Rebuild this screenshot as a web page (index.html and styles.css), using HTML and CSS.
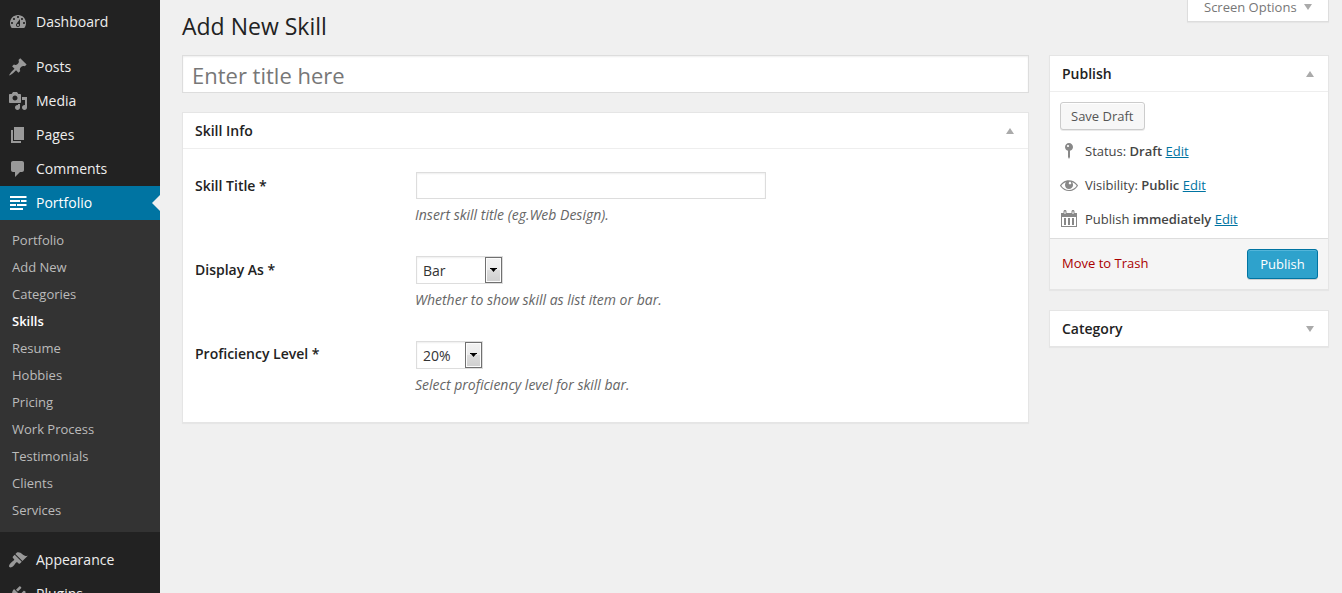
FILE: index.html
```html
<!DOCTYPE html>
<html lang="en">
<head>
<meta charset="utf-8">
<title>Add New Skill</title>
<link rel="stylesheet" href="styles.css">
</head>
<body>
<div class="shell">
  <nav class="sidebar">
    <a class="item"><svg class="icon" viewBox="0 0 20 20"><path fill-rule="evenodd" d="M3.76 16h12.48c1.1-1.37 1.76-3.11 1.76-5 0-4.42-3.58-8-8-8s-8 3.58-8 8c0 1.89.66 3.63 1.76 5zM10 4c.55 0 1 .45 1 1s-.45 1-1 1-1-.45-1-1 .45-1 1-1zM6 6c.55 0 1 .45 1 1s-.45 1-1 1-1-.45-1-1 .45-1 1-1zm8 0c.55 0 1 .45 1 1s-.45 1-1 1-1-.45-1-1 .45-1 1-1zm-5.37 5.55L12 7v6c0 1.1-.9 2-2 2s-2-.9-2-2c0-.57.24-1.08.63-1.45zM4 10c.55 0 1 .45 1 1s-.45 1-1 1-1-.45-1-1 .45-1 1-1zm12 0c.55 0 1 .45 1 1s-.45 1-1 1-1-.45-1-1 .45-1 1-1zm-5 3c0-.55-.45-1-1-1s-1 .45-1 1 .45 1 1 1 1-.45 1-1z"/></svg>Dashboard</a>
    <a class="item spaced"><svg class="icon" viewBox="0 0 20 20"><path d="M10.44 3.02l1.82-1.82 6.36 6.35-1.83 1.82c-1.05-.68-2.48-.57-3.41.36l-.75.75c-.92.93-1.04 2.35-.35 3.41l-1.83 1.82-2.41-2.41-2.8 2.79c-.42.42-3.38 2.71-3.8 2.29s1.86-3.39 2.28-3.81l2.79-2.79L4.1 9.36l1.83-1.82c1.05.69 2.48.57 3.4-.36l.75-.75c.93-.92 1.05-2.35.36-3.41z"/></svg>Posts</a>
    <a class="item"><svg class="icon" viewBox="0 0 20 20"><path fill-rule="evenodd" d="M13 11V4c0-.55-.45-1-1-1h-1.67L9 1H5L3.67 3H2c-.55 0-1 .45-1 1v7c0 .55.45 1 1 1h10c.55 0 1-.45 1-1zM7 4.5c1.38 0 2.5 1.12 2.5 2.5S8.38 9.5 7 9.5 4.5 8.38 4.5 7 5.62 4.5 7 4.5zM14 6h5v10.5c0 1.38-1.12 2.5-2.5 2.5S14 17.88 14 16.5s1.12-2.5 2.5-2.5c.17 0 .34.02.5.05V9h-3V6zm-4 8.05V13h2v3.5c0 1.38-1.12 2.5-2.5 2.5S7 17.88 7 16.5 8.12 14 9.5 14c.17 0 .34.02.5.05z"/></svg>Media</a>
    <a class="item"><svg class="icon" viewBox="0 0 20 20"><path d="M6 15V2h10v13H6zm-1 1h8v2H3V5h2v11z"/></svg>Pages</a>
    <a class="item"><svg class="icon" viewBox="0 0 20 20"><path d="M5 2h9c1.1 0 2 .9 2 2v7c0 1.1-.9 2-2 2h-2l-5 5v-5H5c-1.1 0-2-.9-2-2V4c0-1.1.9-2 2-2z"/></svg>Comments</a>
    <a class="item current"><svg class="icon" viewBox="0 0 20 20"><path d="M2 3h16.500v2H2zM2 7h10v2H2zM13 7h5.500v2H13zM2 11h6v2H2zM9 11h9.500v2H9zM2 15h13v2H2z"/></svg>Portfolio</a>
    <div class="submenu">
      <a>Portfolio</a><a>Add New</a><a>Categories</a><a class="active">Skills</a><a>Resume</a><a>Hobbies</a><a>Pricing</a><a>Work Process</a><a>Testimonials</a><a>Clients</a><a>Services</a>
    </div>
    <a class="item spaced"><svg class="icon" viewBox="0 0 20 20"><path d="M14.48 11.06L7.41 3.99l1.5-1.5c.5-.56 2.3-.47 3.51.32 1.21.8 1.43 1.28 2.91 2.1 1.18.64 2.45 1.26 4.45.85zm-.71.71L6.7 4.7 4.93 6.47c-.39.39-.39 1.02 0 1.41l1.06 1.06c.39.39.39 1.03 0 1.42-.6.6-1.43 1.11-2.21 1.69-.35.26-.7.53-1.01.84C1.43 14.23.4 16.08 1.4 17.07c.99 1 2.84-.03 4.18-1.36.31-.31.58-.66.85-1.02.57-.78 1.08-1.61 1.69-2.21.39-.39 1.02-.39 1.41 0l1.06 1.06c.39.39 1.02.39 1.41 0z"/></svg>Appearance</a>
    <a class="item"><svg class="icon" viewBox="0 0 20 20"><path d="M13.11 4.36L9.87 7.6 8 5.73l3.24-3.24c.35-.34 1.05-.2 1.56.32.52.51.66 1.21.31 1.55zm-8 1.77l.91-1.12 9.01 9.01-1.19.84c-.71.71-2.63 1.16-3.82 1.16H6.14L4.9 17.26c-.59.59-1.54.59-2.12 0-.59-.58-.59-1.53 0-2.12l1.24-1.24v-3.88c0-1.13.4-3.19 1.09-3.89zm7.26 3.97l3.24-3.24c.34-.35 1.04-.21 1.55.31.52.51.66 1.21.31 1.55l-3.24 3.25z"/></svg>Plugins</a>
  </nav>

  <main class="content">
    <header class="top">
      <h1>Add New Skill</h1>
      <div class="screen-options">Screen Options<svg class="arrow" viewBox="0 0 8 6"><path d="M0 0h8L4 6z"/></svg></div>
    </header>
    <div class="columns">
      <div class="primary">
        <input class="title-input" type="text" placeholder="Enter title here">
        <section class="box skill-box">
          <h2>Skill Info<svg class="arrow" viewBox="0 0 8 6"><path d="M0 6h8L4 0z"/></svg></h2>
          <div class="field first">
            <label>Skill Title *</label>
            <div class="control"><input class="text" type="text"><p>Insert skill title (eg.Web Design).</p></div>
          </div>
          <div class="field second">
            <label>Display As *</label>
            <div class="control"><div class="select bar">Bar<span class="drop"><svg viewBox="0 0 7 4"><path d="M0 0h7v1H6L3.5 4 1 1H0z"/></svg></span></div><p>Whether to show skill as list item or bar.</p></div>
          </div>
          <div class="field">
            <label>Proficiency Level *</label>
            <div class="control"><div class="select level">20%<span class="drop"><svg viewBox="0 0 7 4"><path d="M0 0h7v1H6L3.5 4 1 1H0z"/></svg></span></div><p>Select proficiency level for skill bar.</p></div>
          </div>
        </section>
      </div>
      <aside class="side">
        <section class="box">
          <h2>Publish<svg class="arrow" viewBox="0 0 8 6"><path d="M0 6h8L4 0z"/></svg></h2>
          <div class="publish-body">
            <button class="button">Save Draft</button>
            <div class="row"><svg class="icon" viewBox="0 0 20 20"><path fill-rule="evenodd" d="M14 6c0 1.86-1.28 3.41-3 3.86V16l-1 2-1-2V9.860C7.280 9.410 6 7.860 6 6c0-2.210 1.790-4 4-4s4 1.790 4 4zM8 5c0 .55.45 1 1 1s1-.45 1-1-.45-1-1-1-1 .45-1 1z"/></svg><span>Status: <b>Draft</b> <a>Edit</a></span></div>
            <div class="row"><svg class="icon" viewBox="0 0 20 20"><path fill-rule="evenodd" d="M18.300 9.500C15 4.900 8.500 3.800 3.900 7.200c-1.200.9-2.200 2.100-3 3.400.2.400.5.800.8 1.200 3.300 4.600 9.600 5.600 14.200 2.400.9-.7 1.700-1.400 2.400-2.400.3-.4.500-.8.800-1.200-.3-.4-.5-.8-.8-1.100zm-8.200-2.300c.5-.5 1.300-.5 1.800 0s.5 1.300 0 1.800-1.300.5-1.800 0-.5-1.300 0-1.800zm-.1 7.700c-3.100 0-6-1.600-7.700-4.200C3.500 9 5.100 7.800 7 7.200c-.7.8-1 1.700-1 2.700 0 2.200 1.700 4.100 4 4.100 2.200 0 4.100-1.700 4.100-4v-.1c0-1-.4-2-1.100-2.700 1.900.6 3.500 1.800 4.700 3.500-1.700 2.600-4.600 4.200-7.700 4.200z"/></svg><span>Visibility: <b>Public</b> <a>Edit</a></span></div>
            <div class="row"><svg class="icon" viewBox="0 0 20 20"><path fill-rule="evenodd" d="M2 4h2.500V2.500C4.500 1.700 5 1 6 1s1.500.7 1.500 1.500V4h5V2.500c0-.8.500-1.500 1.500-1.500s1.500.7 1.500 1.500V4H18v14H2zM3 8v9h14V8zM5.500 2.500V5h1V2.500zM13.500 2.500V5h1V2.500zM5 9h2v7H5zM9 9h2v7H9zM13 9h2v7h-2z"/></svg><span>Publish <b>immediately</b> <a>Edit</a></span></div>
          </div>
          <footer class="actions"><a class="trash">Move to Trash</a><button class="button main">Publish</button></footer>
        </section>
        <section class="box collapsed"><h2>Category<svg class="arrow" viewBox="0 0 8 6"><path d="M0 0h8L4 6z"/></svg></h2></section>
      </aside>
    </div>
  </main>
</div>
</body>
</html>
```
FILE: styles.css
```css
* { box-sizing: border-box; }
body { margin: 0; height: 593px; overflow: hidden; background: #f0f0f0; color: #444; font: 13px/18px "Open Sans", sans-serif; }
.shell { display: flex; height: 593px; overflow: hidden; }
.sidebar { flex: none; width: 160px; height: 100%; padding-top: 5px; background: #222; overflow: hidden; }
.item { display: flex; align-items: center; height: 34px; padding-left: 8px; gap: 8px; color: #eee; font-size: 14px; }
.icon { flex: none; width: 20px; height: 20px; fill: #999; }
.spaced { margin-top: 11px; }
.current { position: relative; background: #0074a2; color: #fff; }
.current .icon { fill: #fff; }
.current::after { content: ""; position: absolute; right: 0; top: 9px; border: 8px solid transparent; border-left: 0; border-right-color: #f0f0f0; }
.submenu { display: flex; flex-direction: column; padding: 7px 12px 8px; background: #333; }
.submenu a { height: 27px; line-height: 27px; color: #bbb; }
.submenu .active { color: #fff; font-weight: 600; }

.content { flex: 1; padding: 0 13px 0 22px; }
.top { display: flex; justify-content: space-between; align-items: flex-start; height: 55px; }
h1 { margin: 12px 0 0; font-size: 23px; line-height: 29px; font-weight: 400; color: #222; }
.screen-options { display: flex; align-items: flex-start; gap: 7px; width: 142px; height: 22px; padding-left: 16px; border: 1px solid #ddd; border-top: 0; background: #fff; color: #777; line-height: 14px; box-shadow: 0 1px 1px rgba(0,0,0,.04); }
.arrow { width: 8px; height: 6px; fill: #aaa; }
.screen-options .arrow { margin-top: 4px; }
.columns { display: flex; gap: 20px; align-items: flex-start; }
.primary { flex: 1; }
input { display: block; border: 1px solid #ddd; background: #fff; box-shadow: inset 0 1px 2px rgba(0,0,0,.07); font-family: inherit; outline: 0; }
.title-input { width: 100%; height: 38px; padding: 1px 9px 0; font-size: 22px; color: #333; }
.title-input::placeholder { color: #777; opacity: 1; }
.box { border: 1px solid #e5e5e5; background: #fff; box-shadow: 0 1px 1px rgba(0,0,0,.04); }
.box h2 { display: flex; align-items: center; justify-content: space-between; height: 36px; margin: 0; padding: 0 14px 0 12px; border-bottom: 1px solid #eee; color: #222; font-size: 14px; font-weight: 600; }
.skill-box { height: 311px; margin-top: 19px; }
.field { display: flex; height: 85px; padding: 23px 12px 0; }
.first { height: 84px; }
.field label { width: 221px; padding-top: 4px; font-size: 14px; font-weight: 600; color: #222; }
.first label, .second label { padding-top: 5px; }
.field p { margin: 7px 0 0 -1px; font-size: 14px; line-height: 18px; font-style: italic; color: #666; }
.text { width: 350px; height: 27px; }
.select { display: flex; justify-content: space-between; height: 28px; padding: 0 0 0 6px; border: 1px solid #ddd; box-shadow: inset 0 1px 2px rgba(0,0,0,.07); color: #333; font-size: 14px; line-height: 28px; }
.bar { width: 87px; }
.level { width: 67px; }
.drop { display: flex; align-items: center; justify-content: center; width: 17px; height: 26px; border: 1px solid #707070; background: linear-gradient(#f2f2f2, #ebebeb 50%, #ddd 50%, #cfcfcf); box-shadow: inset 0 0 0 1px #fcfcfc; }
.drop svg { width: 7px; height: 4px; }

.side { width: 280px; }
.publish-body { height: 147px; padding: 10px 10px 0 9px; border-bottom: 1px solid #ddd; }
.button { display: block; height: 28px; margin: 0 0 4px 1px; padding: 0 10px; border: 1px solid #ccc; border-radius: 3px; background: #f7f7f7; box-shadow: inset 0 1px 0 #fff, 0 1px 0 rgba(0,0,0,.08); color: #555; font: 13px/26px "Open Sans", sans-serif; }
.row { display: flex; align-items: center; gap: 6px; height: 34px; }
.row .icon { fill: #888; }
.row b { font-weight: 600; }
.row a { color: #0074a2; text-decoration: underline; }
.actions { display: flex; align-items: flex-start; justify-content: space-between; height: 50px; padding: 10px 10px 0 12px; background: #f5f5f5; }
.trash { margin-top: 5px; color: #a00; }
.main { width: 71px; height: 30px; margin: 0; padding: 0; border-color: #0074a2; background: #2ea2cc; box-shadow: inset 0 1px 0 rgba(120,200,230,.5), 0 1px 0 rgba(0,0,0,.15); color: #fff; line-height: 28px; }
.collapsed { margin-top: 20px; }
.collapsed h2 { height: 35px; border-bottom: 0; }
```
